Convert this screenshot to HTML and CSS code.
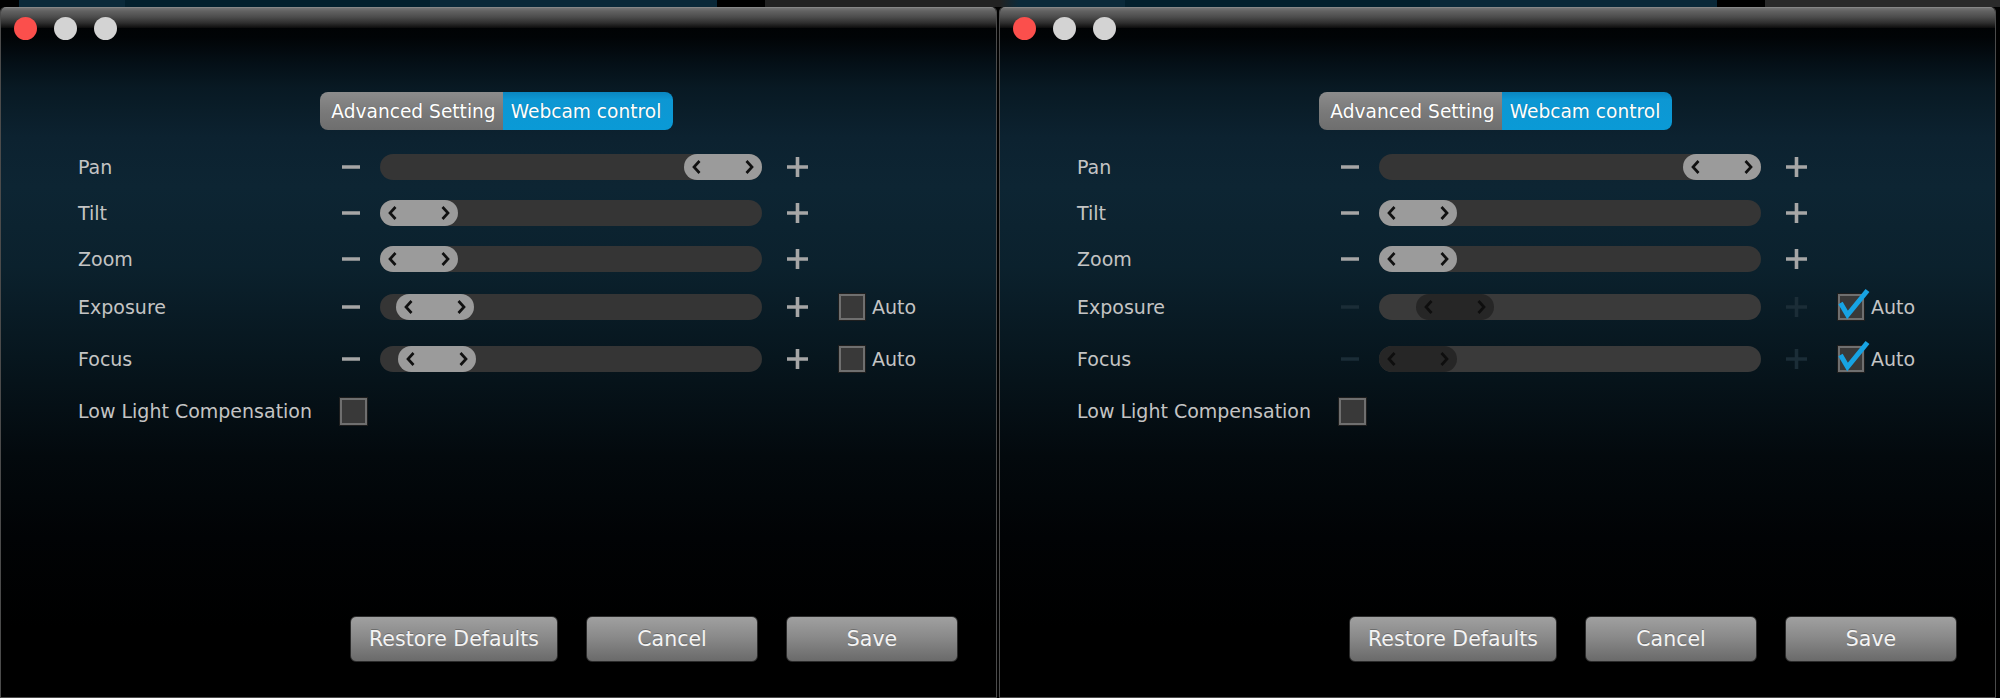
FILE: index.html
```html
<!DOCTYPE html>
<html>
<head>
<meta charset="utf-8">
<title>Webcam control</title>
<link rel="stylesheet" href="styles.css">
</head>
<body>
<div class="screen">
  <div class="strip"></div>
  <div class="windows">
    <section class="window">
      <div class="titlebar">
        <span class="light close"></span><span class="light"></span><span class="light"></span>
      </div>
      <div class="tabs">
        <div class="tab tab-gray">Advanced Setting</div>
        <div class="tab tab-blue">Webcam control</div>
      </div>
      <div class="controls">
        <div class="row">
          <span class="label">Pan</span>
          <svg class="minus" width="18" height="4" viewBox="0 0 18 4"><path d="M0 2H18" stroke="currentColor" stroke-width="3.5"/></svg>
          <div class="track"><div class="thumb" style="margin-left:304px"><svg width="9" height="14" viewBox="0 0 9 14"><path d="M7.5 1L2 7L7.5 13" /></svg><svg width="9" height="14" viewBox="0 0 9 14"><path d="M1.5 1L7 7L1.5 13" /></svg></div></div>
          <svg class="plus" width="21" height="20" viewBox="0 0 21 20"><path d="M0 10H21M10.5 0V20" stroke="currentColor" stroke-width="3.6"/></svg>
        </div>
        <div class="row">
          <span class="label">Tilt</span>
          <svg class="minus" width="18" height="4" viewBox="0 0 18 4"><path d="M0 2H18" stroke="currentColor" stroke-width="3.5"/></svg>
          <div class="track"><div class="thumb" style="margin-left:0px"><svg width="9" height="14" viewBox="0 0 9 14"><path d="M7.5 1L2 7L7.5 13" /></svg><svg width="9" height="14" viewBox="0 0 9 14"><path d="M1.5 1L7 7L1.5 13" /></svg></div></div>
          <svg class="plus" width="21" height="20" viewBox="0 0 21 20"><path d="M0 10H21M10.5 0V20" stroke="currentColor" stroke-width="3.6"/></svg>
        </div>
        <div class="row">
          <span class="label">Zoom</span>
          <svg class="minus" width="18" height="4" viewBox="0 0 18 4"><path d="M0 2H18" stroke="currentColor" stroke-width="3.5"/></svg>
          <div class="track"><div class="thumb" style="margin-left:0px"><svg width="9" height="14" viewBox="0 0 9 14"><path d="M7.5 1L2 7L7.5 13" /></svg><svg width="9" height="14" viewBox="0 0 9 14"><path d="M1.5 1L7 7L1.5 13" /></svg></div></div>
          <svg class="plus" width="21" height="20" viewBox="0 0 21 20"><path d="M0 10H21M10.5 0V20" stroke="currentColor" stroke-width="3.6"/></svg>
        </div>
        <div class="row row-gap22">
          <span class="label">Exposure</span>
          <svg class="minus" width="18" height="4" viewBox="0 0 18 4"><path d="M0 2H18" stroke="currentColor" stroke-width="3.5"/></svg>
          <div class="track"><div class="thumb" style="margin-left:16px"><svg width="9" height="14" viewBox="0 0 9 14"><path d="M7.5 1L2 7L7.5 13" /></svg><svg width="9" height="14" viewBox="0 0 9 14"><path d="M1.5 1L7 7L1.5 13" /></svg></div></div>
          <svg class="plus" width="21" height="20" viewBox="0 0 21 20"><path d="M0 10H21M10.5 0V20" stroke="currentColor" stroke-width="3.6"/></svg>
          <span class="checkbox"></span><span class="auto">Auto</span>
        </div>
        <div class="row row-gap26">
          <span class="label">Focus</span>
          <svg class="minus" width="18" height="4" viewBox="0 0 18 4"><path d="M0 2H18" stroke="currentColor" stroke-width="3.5"/></svg>
          <div class="track"><div class="thumb" style="margin-left:18px"><svg width="9" height="14" viewBox="0 0 9 14"><path d="M7.5 1L2 7L7.5 13" /></svg><svg width="9" height="14" viewBox="0 0 9 14"><path d="M1.5 1L7 7L1.5 13" /></svg></div></div>
          <svg class="plus" width="21" height="20" viewBox="0 0 21 20"><path d="M0 10H21M10.5 0V20" stroke="currentColor" stroke-width="3.6"/></svg>
          <span class="checkbox"></span><span class="auto">Auto</span>
        </div>
        <div class="row row-gap26">
          <span class="label label-llc">Low Light Compensation</span>
          <span class="checkbox checkbox-lg"></span>
        </div>
      </div>
      <div class="actions">
        <button class="btn btn-wide">Restore Defaults</button>
        <button class="btn">Cancel</button>
        <button class="btn">Save</button>
      </div>
    </section>

    <section class="window">
      <div class="titlebar">
        <span class="light close"></span><span class="light"></span><span class="light"></span>
      </div>
      <div class="tabs">
        <div class="tab tab-gray">Advanced Setting</div>
        <div class="tab tab-blue">Webcam control</div>
      </div>
      <div class="controls">
        <div class="row">
          <span class="label">Pan</span>
          <svg class="minus" width="18" height="4" viewBox="0 0 18 4"><path d="M0 2H18" stroke="currentColor" stroke-width="3.5"/></svg>
          <div class="track"><div class="thumb" style="margin-left:304px"><svg width="9" height="14" viewBox="0 0 9 14"><path d="M7.5 1L2 7L7.5 13" /></svg><svg width="9" height="14" viewBox="0 0 9 14"><path d="M1.5 1L7 7L1.5 13" /></svg></div></div>
          <svg class="plus" width="21" height="20" viewBox="0 0 21 20"><path d="M0 10H21M10.5 0V20" stroke="currentColor" stroke-width="3.6"/></svg>
        </div>
        <div class="row">
          <span class="label">Tilt</span>
          <svg class="minus" width="18" height="4" viewBox="0 0 18 4"><path d="M0 2H18" stroke="currentColor" stroke-width="3.5"/></svg>
          <div class="track"><div class="thumb" style="margin-left:0px"><svg width="9" height="14" viewBox="0 0 9 14"><path d="M7.5 1L2 7L7.5 13" /></svg><svg width="9" height="14" viewBox="0 0 9 14"><path d="M1.5 1L7 7L1.5 13" /></svg></div></div>
          <svg class="plus" width="21" height="20" viewBox="0 0 21 20"><path d="M0 10H21M10.5 0V20" stroke="currentColor" stroke-width="3.6"/></svg>
        </div>
        <div class="row">
          <span class="label">Zoom</span>
          <svg class="minus" width="18" height="4" viewBox="0 0 18 4"><path d="M0 2H18" stroke="currentColor" stroke-width="3.5"/></svg>
          <div class="track"><div class="thumb" style="margin-left:0px"><svg width="9" height="14" viewBox="0 0 9 14"><path d="M7.5 1L2 7L7.5 13" /></svg><svg width="9" height="14" viewBox="0 0 9 14"><path d="M1.5 1L7 7L1.5 13" /></svg></div></div>
          <svg class="plus" width="21" height="20" viewBox="0 0 21 20"><path d="M0 10H21M10.5 0V20" stroke="currentColor" stroke-width="3.6"/></svg>
        </div>
        <div class="row row-gap22 disabled">
          <span class="label">Exposure</span>
          <svg class="minus" width="18" height="4" viewBox="0 0 18 4"><path d="M0 2H18" stroke="currentColor" stroke-width="3.5"/></svg>
          <div class="track"><div class="thumb" style="margin-left:37px"><svg width="9" height="14" viewBox="0 0 9 14"><path d="M7.5 1L2 7L7.5 13" /></svg><svg width="9" height="14" viewBox="0 0 9 14"><path d="M1.5 1L7 7L1.5 13" /></svg></div></div>
          <svg class="plus" width="21" height="20" viewBox="0 0 21 20"><path d="M0 10H21M10.5 0V20" stroke="currentColor" stroke-width="3.6"/></svg>
          <span class="checkbox checked"><svg class="check" width="32" height="32" viewBox="0 0 32 32"><path d="M2.5 15L9.5 27L29.5 2.5"/></svg></span><span class="auto">Auto</span>
        </div>
        <div class="row row-gap26 disabled">
          <span class="label">Focus</span>
          <svg class="minus" width="18" height="4" viewBox="0 0 18 4"><path d="M0 2H18" stroke="currentColor" stroke-width="3.5"/></svg>
          <div class="track"><div class="thumb" style="margin-left:0px"><svg width="9" height="14" viewBox="0 0 9 14"><path d="M7.5 1L2 7L7.5 13" /></svg><svg width="9" height="14" viewBox="0 0 9 14"><path d="M1.5 1L7 7L1.5 13" /></svg></div></div>
          <svg class="plus" width="21" height="20" viewBox="0 0 21 20"><path d="M0 10H21M10.5 0V20" stroke="currentColor" stroke-width="3.6"/></svg>
          <span class="checkbox checked"><svg class="check" width="32" height="32" viewBox="0 0 32 32"><path d="M2.5 15L9.5 27L29.5 2.5"/></svg></span><span class="auto">Auto</span>
        </div>
        <div class="row row-gap26">
          <span class="label label-llc">Low Light Compensation</span>
          <span class="checkbox checkbox-lg"></span>
        </div>
      </div>
      <div class="actions">
        <button class="btn btn-wide">Restore Defaults</button>
        <button class="btn">Cancel</button>
        <button class="btn">Save</button>
      </div>
    </section>
  </div>
</div>
</body>
</html>
```

FILE: styles.css
```css
html, body {
  margin: 0;
  padding: 0;
  background: #000;
}

body {
  width: 2000px;
  height: 698px;
  overflow: hidden;
  font-family: "DejaVu Sans", "Liberation Sans", sans-serif;
}

.screen {
  display: flex;
  flex-direction: column;
}

.strip {
  height: 7px;
  background: linear-gradient(90deg,
    #000 0, #000 19px,
    #0b2a3a 19px, #0b2a3a 125px,
    #03202d 125px, #03202d 430px,
    #0a2838 430px, #0a2838 717px,
    #000 717px, #000 765px,
    #222 765px, #222 1000px,
    #0b2a3a 1019px, #0b2a3a 1125px,
    #03202d 1125px, #03202d 1430px,
    #0a2838 1430px, #0a2838 1717px,
    #000 1717px, #000 1765px,
    #2a2a2a 1765px, #2a2a2a 2000px);
}

.windows {
  display: flex;
  gap: 2px;
  height: 691px;
}

.window {
  width: 997px;
  height: 691px;
  box-sizing: border-box;
  border: 1px solid #4b4b4b;
  border-top: none;
  border-radius: 5px 5px 0 0;
  display: flex;
  flex-direction: column;
  background: linear-gradient(180deg,
    #000 0px,
    #010406 30px,
    #051119 60px,
    #081923 80px,
    #0c2230 130px,
    #0d2533 180px,
    #0b212d 260px,
    #07161e 350px,
    #03090d 450px,
    #010305 530px,
    #000 620px);
}

.titlebar {
  height: 40px;
  box-sizing: border-box;
  padding: 10px 0 0 13px;
  display: flex;
  gap: 17px;
  border-radius: 5px 5px 0 0;
  background: linear-gradient(180deg,
    #9a9a9a 0, #747474 1px, #626262 4px, #4c4c4c 10px, #2e2e2e 16px, #0c0c0c 21px)
    top left / 100% 21px no-repeat;
}

.light {
  width: 23px;
  height: 23px;
  border-radius: 50%;
  background: #d3d3d3;
}

.light.close {
  background: #fb4f4c;
}

.tabs {
  margin-top: 45px;
  display: flex;
  justify-content: center;
  padding-right: 4px;
}

.tab {
  height: 38px;
  display: flex;
  align-items: center;
  justify-content: center;
  font-size: 18.6px;
  color: #fff;
  text-shadow: 0 0 1px rgba(0, 0, 0, 0.3);
  box-sizing: border-box;
}

.tab-gray {
  width: 183px;
  border-radius: 8px 0 0 8px;
  background: linear-gradient(180deg, #8c8c8c 0, #7a7a7a 50%, #6e6e6e 100%);
  padding-left: 4px;
}

.tab-blue {
  width: 170px;
  border-radius: 0 8px 8px 0;
  background: linear-gradient(180deg, #0a86c0 0, #0d97d3 20%, #0a9ad6 100%);
  padding-right: 4px;
}

.controls {
  margin-top: 24px;
  padding-left: 77px;
  display: flex;
  flex-direction: column;
  gap: 20px;
}

.row {
  height: 26px;
  display: flex;
  align-items: center;
}

.row-gap22 {
  margin-top: 2px;
}

.row-gap26 {
  margin-top: 6px;
}

.label {
  width: 264px;
  font-size: 19px;
  color: #c4c4c4;
  flex-shrink: 0;
}

.label-llc {
  width: 262px;
}

.minus {
  color: #a6a6a6;
  flex-shrink: 0;
}

.plus {
  color: #a6a6a6;
  margin-left: 25px;
  flex-shrink: 0;
}

.track {
  margin-left: 20px;
  width: 382px;
  height: 26px;
  border-radius: 13px;
  background: #353535;
  display: flex;
  flex-shrink: 0;
}

.thumb {
  width: 78px;
  height: 26px;
  box-sizing: border-box;
  border-radius: 13px;
  background: #9b9b9b;
  display: flex;
  align-items: center;
  justify-content: space-between;
  padding: 0 8px 0 8px;
}

.thumb path {
  fill: none;
  stroke: #111;
  stroke-width: 2.7;
}

.checkbox {
  width: 26px;
  height: 26px;
  box-sizing: border-box;
  margin-left: 31px;
  border: 2px solid #6f6f6f;
  outline: 1px solid #1e1e1e;
  background: #393939;
  position: relative;
  flex-shrink: 0;
}

.checkbox-lg {
  width: 27px;
  height: 27px;
  margin-left: 0;
}

.auto {
  margin-left: 7px;
  font-size: 19px;
  color: #c4c4c4;
}

.check {
  position: absolute;
  left: -2px;
  top: -8px;
}

.check path {
  fill: none;
  stroke: #17a3e3;
  stroke-width: 5;
}

.disabled .minus,
.disabled .plus {
  color: #1b2d37;
}

.disabled .track {
  background: #3a3a3a;
}

.disabled .thumb {
  background: #262626;
}

.disabled .thumb path {
  stroke: #0e0e0e;
}

.actions {
  margin-top: auto;
  display: flex;
  justify-content: flex-end;
  gap: 28px;
  padding: 0 38px 35px 0;
}

.btn {
  width: 172px;
  height: 46px;
  box-sizing: border-box;
  border: 1px solid #2b2b2b;
  border-radius: 6px;
  background: linear-gradient(180deg, #a0a0a0 0, #8a8a8a 45%, #6a6a6a 100%);
  color: #f4f4f4;
  font-family: "DejaVu Sans", "Liberation Sans", sans-serif;
  font-size: 20.5px;
  text-shadow: 0 -1px 0 rgba(0, 0, 0, 0.25);
  padding: 0;
}

.btn-wide {
  width: 208px;
}
```
